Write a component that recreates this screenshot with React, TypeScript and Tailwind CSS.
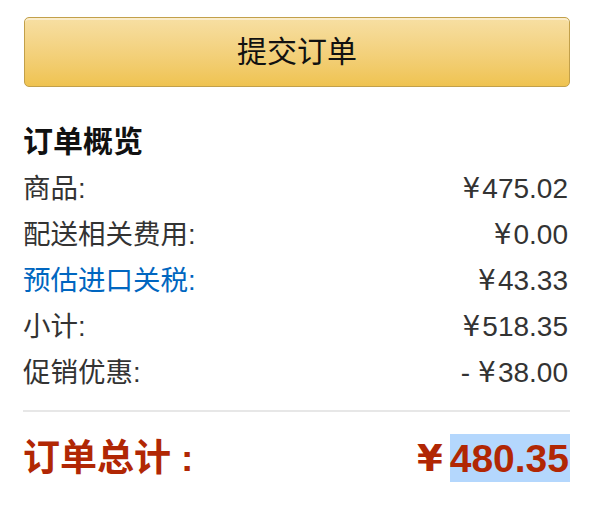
import React from "react";

const font = { fontFamily: '"Liberation Sans", "Noto Sans CJK SC", sans-serif' };

function Yen({ className = "" }: { className?: string }) {
  return (
    <span className={className} style={{ fontFamily: '"DejaVu Sans", sans-serif' }}>
      ¥
    </span>
  );
}

function Row({
  label,
  value,
  minus,
  link,
}: {
  label: string;
  value: string;
  minus?: boolean;
  link?: boolean;
}) {
  return (
    <div className="flex h-[46px] items-center justify-between">
      <span className={`text-[27.5px] leading-none ${link ? "text-[#0066c0]" : "text-[#333333]"}`}>
        {label}
      </span>
      <span className="flex items-center pr-[2px] text-[28px] leading-none text-[#333333]">
        {minus && <span className="mr-[8px]">-</span>}
        <Yen className="mr-[2px]" />
        <span>{value}</span>
      </span>
    </div>
  );
}

export default function App() {
  return (
    <div className="h-[515px] w-[600px] bg-white" style={font}>
      <div className="ml-[23px] flex w-[547px] flex-col pt-[17px]">
        <button className="ml-[1px] flex h-[70px] w-[546px] items-center justify-center rounded-[5px] border border-[#c2a04a] bg-gradient-to-b from-[#f7dfa3] to-[#efc350] text-[30px] leading-none text-[#111111] shadow-[inset_0_2px_0_rgba(255,255,255,0.45)]">
          提交订单
        </button>
        <div className="mt-[35px] flex h-[40px] items-center text-[30px] font-bold leading-none text-[#111111]">
          订单概览
        </div>
        <div className="mt-[4px] flex flex-col">
          <Row label="商品:" value="475.02" />
          <Row label="配送相关费用:" value="0.00" />
          <Row label="预估进口关税:" value="43.33" link />
          <Row label="小计:" value="518.35" />
          <Row label="促销优惠:" value="38.00" minus />
        </div>
        <div className="mt-[14px] h-[2px] w-full bg-[#e7e7e7]" />
        <div className="mt-[22px] flex h-[48px] items-center justify-between font-bold text-[#b12704]">
          <span className="flex items-center text-[37px] leading-none">
            订单总计<span className="ml-[10px]">:</span>
          </span>
          <span className="flex h-[48px] items-center">
            <Yen className="mr-[7px] text-[37px] leading-none" />
            <span className="flex h-[48px] items-center bg-[#b4d7fd] pr-[1px] text-[39px] leading-none">
              480.35
            </span>
          </span>
        </div>
      </div>
    </div>
  );
}
